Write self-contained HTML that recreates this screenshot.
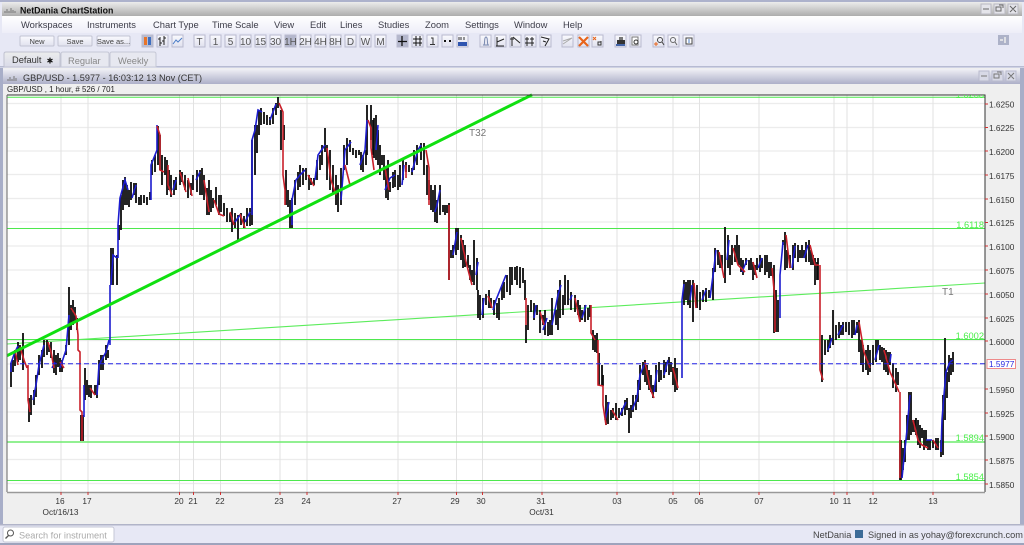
<!DOCTYPE html>
<html><head><meta charset="utf-8"><title>NetDania ChartStation</title>
<style>
html,body{margin:0;padding:0;background:#e7e8f5;width:1024px;height:545px;overflow:hidden}
svg{display:block;font-family:"Liberation Sans",sans-serif}
.m{font-size:9.4px;fill:#3c3c48}
.b{font-size:7.5px;fill:#444;text-anchor:middle}
.s{font-size:10px;fill:#555;text-anchor:middle}
.p{font-size:8.3px;fill:#333}
.d{font-size:8.3px;fill:#333;text-anchor:middle}
.g{font-size:9.3px;fill:#4cf04c;text-anchor:end}
</style></head><body>
<svg width="1024" height="545" viewBox="0 0 1024 545" xmlns="http://www.w3.org/2000/svg">
<defs>
<linearGradient id="tb" x1="0" y1="0" x2="0" y2="1"><stop offset="0" stop-color="#ececec"/><stop offset="1" stop-color="#adadad"/></linearGradient>
<linearGradient id="cw" x1="0" y1="0" x2="0" y2="1"><stop offset="0" stop-color="#f0f0f5"/><stop offset="1" stop-color="#adb0c8"/></linearGradient>
<linearGradient id="mn" x1="0" y1="0" x2="0" y2="1"><stop offset="0" stop-color="#ffffff"/><stop offset="1" stop-color="#eeeef8"/></linearGradient>
<linearGradient id="btn" x1="0" y1="0" x2="0" y2="1"><stop offset="0" stop-color="#fafafe"/><stop offset="1" stop-color="#e0e1ee"/></linearGradient>
<linearGradient id="tab" x1="0" y1="0" x2="0" y2="1"><stop offset="0" stop-color="#eceded"/><stop offset="1" stop-color="#d9dae8"/></linearGradient>
<clipPath id="pc"><rect x="7" y="95" width="978" height="397"/></clipPath>
</defs>
<rect width="1024" height="545" fill="#e7e8f5"/>
<!-- outer border -->
<rect x="0" y="0" width="1024" height="2" fill="#adb2cc"/>
<rect x="0" y="543" width="1024" height="2" fill="#9ea3bc"/>
<!-- title bar -->
<rect x="2" y="2" width="1020" height="14" fill="url(#tb)"/>
<path d="M5 13V11M7 13V9M9 13V11M11 13V8M13 13V10M15 13V11" stroke="#777" stroke-width="1"/>
<text x="20" y="13.500" font-size="8.800" font-weight="bold" fill="#111">NetDania ChartStation</text>
<g fill="#e4e4ea" stroke="#b9b9c2"><rect x="981" y="4" width="10" height="10"/><rect x="994" y="4" width="11" height="10"/><rect x="1008" y="4" width="10" height="10"/></g>
<path d="M983 9h6M996 7h5v4h-5zM999 5h4v3M1010 6l6 6M1016 6l-6 6" fill="none" stroke="#666" stroke-width="1"/>
<!-- menu -->
<rect x="2" y="16" width="1020" height="17" fill="url(#mn)"/>
<text class="m" x="21" y="28">Workspaces</text><text class="m" x="87" y="28">Instruments</text><text class="m" x="153" y="28">Chart Type</text><text class="m" x="212" y="28">Time Scale</text><text class="m" x="274" y="28">View</text><text class="m" x="310" y="28">Edit</text><text class="m" x="340" y="28">Lines</text><text class="m" x="378" y="28">Studies</text><text class="m" x="425" y="28">Zoom</text><text class="m" x="465" y="28">Settings</text><text class="m" x="514" y="28">Window</text><text class="m" x="563" y="28">Help</text>
<!-- toolbar buttons -->
<g fill="url(#btn)" stroke="#c2c3d2"><rect x="20" y="36" width="34" height="10" rx="1"/><rect x="58" y="36" width="34" height="10" rx="1"/><rect x="97" y="36" width="33" height="10" rx="1"/></g>
<text class="b" x="37" y="44">New</text><text class="b" x="75" y="44">Save</text><text class="b" x="113.500" y="44">Save as...</text>
<g fill="url(#btn)" stroke="#b9bace">
<rect x="142" y="35" width="11" height="12" fill="#b9bdd2"/><rect x="157" y="35" width="11" height="12"/><rect x="172" y="35" width="11" height="12"/>
<rect x="194" y="35" width="11" height="12"/><rect x="210" y="35" width="11" height="12"/><rect x="225" y="35" width="11" height="12"/><rect x="240" y="35" width="11" height="12"/><rect x="255" y="35" width="11" height="12"/><rect x="270" y="35" width="11" height="12"/><rect x="285" y="35" width="11" height="12" fill="#b4b7cc"/><rect x="300" y="35" width="11" height="12"/><rect x="315" y="35" width="11" height="12"/><rect x="330" y="35" width="11" height="12"/><rect x="345" y="35" width="11" height="12"/><rect x="360" y="35" width="11" height="12"/><rect x="375" y="35" width="11" height="12"/>
<rect x="397" y="35" width="11" height="12" fill="#b4b7cc"/><rect x="412" y="35" width="11" height="12"/><rect x="427" y="35" width="11" height="12"/><rect x="442" y="35" width="11" height="12"/><rect x="457" y="35" width="11" height="12"/>
<rect x="480" y="35" width="11" height="12"/><rect x="495" y="35" width="11" height="12"/><rect x="510" y="35" width="11" height="12"/><rect x="525" y="35" width="11" height="12"/><rect x="540" y="35" width="11" height="12"/>
<rect x="562" y="35" width="11" height="12"/><rect x="578" y="35" width="11" height="12"/><rect x="592" y="35" width="11" height="12"/>
<rect x="615" y="35" width="11" height="12"/><rect x="630" y="35" width="11" height="12"/><rect x="653" y="35" width="11" height="12"/><rect x="668" y="35" width="11" height="12"/><rect x="683" y="35" width="11" height="11"/>
</g>
<text class="s" x="199.500" y="45">T</text><text class="s" x="215.500" y="45">1</text><text class="s" x="230.500" y="45">5</text><text class="s" x="245.500" y="45">10</text><text class="s" x="260.500" y="45">15</text><text class="s" x="275.500" y="45">30</text><text class="s" x="290.500" y="45">1H</text><text class="s" x="305.500" y="45">2H</text><text class="s" x="320.500" y="45">4H</text><text class="s" x="335.500" y="45">8H</text><text class="s" x="350.500" y="45">D</text><text class="s" x="365.500" y="45">W</text><text class="s" x="380.500" y="45">M</text>
<!-- toolbar icons -->
<path d="M145.500 37v8" stroke="#e8742a" stroke-width="3"/><path d="M149.500 37v8" stroke="#3f6fc0" stroke-width="3"/>
<path d="M160 37v9M158 39h2M160 43h2M164 36v9M162 41h2M164 38h2" stroke="#222" fill="none"/>
<path d="M173 44l3-4 2 2 4-4" stroke="#4a7cc8" fill="none"/>
<path d="M398 41.500h9M402 36v10" stroke="#111" fill="none" stroke-width="1.300"/>
<path d="M413 39h9M413 43h9M416 36v10M420 36v10" stroke="#111" fill="none"/>
<path d="M431 38h2v6M430 44.500h5" stroke="#333" fill="none"/>
<path d="M444 41h2M449 41h2" stroke="#111" stroke-width="2"/>
<rect x="458" y="42" width="9" height="4" fill="#2f55b0"/><path d="M459 37v3M461 37v3M464 37v3" stroke="#333"/>
<path d="M483 45h6M484 45c1-1 0-8 2-8s1 7 2 8" stroke="#7a8ab0" fill="none"/>
<path d="M497 37v9M497 42l7-3M496 46h8" stroke="#222" fill="none"/>
<path d="M512 37v9M510 39h4M513 37l7 6" stroke="#222" fill="none"/>
<path d="M527 37v9M532 37v9M525 39h4M530 39h4M525 43h9" stroke="#222" fill="none"/>
<path d="M541 37l8 2-4 7M543 41l3 1" stroke="#222" fill="none"/>
<path d="M563 44l9-6M563 41l9-3" stroke="#aaa" fill="none"/>
<path d="M579 37l9 9M588 37l-9 9" stroke="#e8641a" stroke-width="2.200"/>
<path d="M593 37l3 3M596 37l-3 3" stroke="#e8641a"/><path d="M598 45v-3h3v3zM601 45v-4" stroke="#333" fill="none"/>
<rect x="617" y="40" width="8" height="4" fill="#333"/><rect x="619" y="37" width="4" height="3" fill="#777"/><rect x="616" y="44" width="9" height="2" fill="#4465a8"/>
<rect x="632" y="37" width="6" height="8" fill="#fff" stroke="#777"/><circle cx="636" cy="42" r="2" fill="none" stroke="#333"/>
<circle cx="660" cy="40" r="2.500" fill="none" stroke="#444"/><path d="M662 42l2 3" stroke="#444"/><path d="M654 44h4M656 42v4" stroke="#e8641a"/>
<circle cx="673" cy="40" r="2.500" fill="none" stroke="#666"/><path d="M675 42l2 3" stroke="#666"/>
<rect x="686" y="38" width="6" height="6" fill="#fff" stroke="#444"/><path d="M689 39v4" stroke="#4a7cc8"/>
<rect x="998" y="35" width="11" height="10" fill="#adb2c8"/><path d="M1000 40h3M1005 37v6" stroke="#eee" stroke-width="1.500"/>
<!-- tabs -->
<rect x="0" y="66" width="1024" height="1.500" fill="#b7bbd2"/>
<path d="M4 67V54q0-2 2-2h52q2 0 2 2v13z" fill="url(#tab)" stroke="#c0c2d0"/>
<path d="M61 67V54q0-2 2-2h44q2 0 2 2v13z" fill="#e7e8f0" stroke="#c6c8d6"/>
<path d="M110 67V54q0-2 2-2h42q2 0 2 2v13z" fill="#e7e8f0" stroke="#c6c8d6"/>
<text x="12" y="63" font-size="9.300" fill="#333">Default</text><text x="50" y="63.500" text-anchor="middle" font-size="8" fill="#111" style="font-family:'DejaVu Sans',sans-serif">✱</text>
<text x="68" y="64" font-size="9.300" fill="#888">Regular</text><text x="118" y="64" font-size="9.300" fill="#888">Weekly</text>
<!-- chart window -->
<rect x="0" y="68" width="3" height="457" fill="#a8aec8"/>
<rect x="1020" y="68" width="4" height="457" fill="#a8aec8"/>
<rect x="3" y="68" width="1017" height="456" fill="#efefef"/>
<rect x="3" y="69" width="1017" height="15" fill="url(#cw)"/>
<path d="M8 81V79M10 81V77M12 81V79M14 81V76M16 81V78" stroke="#777"/>
<text x="23" y="81" font-size="9.150" fill="#333">GBP/USD - 1.5977 - 16:03:12  13 Nov (CET)</text>
<g fill="#d8d9e6" stroke="#b9bace"><rect x="979" y="71" width="10" height="10"/><rect x="992" y="71" width="11" height="10"/><rect x="1006" y="71" width="10" height="10"/></g>
<path d="M981 76h6M994 74h5v4h-5zM997 72h4v3M1008 73l6 6M1014 73l-6 6" fill="none" stroke="#777"/>
<text x="7" y="92" font-size="7.900" fill="#222">GBP/USD , 1 hour, # 526 / 701</text>
<!-- plot -->
<rect x="7" y="95" width="978" height="397" fill="#fff"/>
<path d="M7 103.500H985M7 127.500H985M7 151H985M7 174.500H985M7 198.500H985M7 222H985M7 246H985M7 270H985M7 293.500H985M7 317H985M7 340.500H985M7 364H985M7 388H985M7 412H985M7 436H985M7 459.500H985M7 483.500H985" stroke="#ececec" stroke-width="1.300"/>
<path d="M61 95V492M88 95V492M179.500 95V492M193.500 95V492M220.500 95V492M280 95V492M307 95V492M398 95V492M456.500 95V492M482.500 95V492M542 95V492M617 95V492M673 95V492M699.500 95V492M759 95V492M834 95V492M847 95V492M873 95V492M933 95V492" stroke="#e2e2e2" stroke-width="1"/>
<!-- green horizontals -->
<path d="M7 97.300H985M7 228.500H985M7 339.500H985M7 480.500H985" stroke="#4ee84e" stroke-width="1"/>
<path d="M7 442H985" stroke="#6eec6e" stroke-width="1.500"/>
<path d="M7 344L985 283" stroke="#5cec5c" stroke-width="1.100"/>
<!-- wicks -->
<path fill="none" stroke="#0c0c0c" stroke-width="1.800" d="M11 363V387M13 360V372M15 350V366M18 342V362M20 345V360M23 333V370M29 398V422M31 395V415M34 390V405M36 375V397M39 355V375M42 350V368M44 340V357M47 340V355M49 345V352M51 342V358M54 350V373M56 355V375M58 353V367M60 358V372M62 360V372M66 345V355M69 287V345M71 305V330M73 300V325M75 307V322M77 318V330M81 415V441M83 415V441M85 368V400M87 380V395M89 385V397M91 385V398M95 385V395M97 385V398M99 360V385M101 355V370M103 355V370M106 345V360M108 350V358M111 248V285M113 248V285M117 255V285M119 225V240M121 195V230M123 180V210M125 177V205M127 185V205M129 190V207M131 182V200M134 183V195M136 183V203M139 197V205M141 195V205M144 195V203M147 197V205M150 192V200M152 160V175M155 155V172M158 126V165M160 135V170M162 155V185M165 157V175M167 160V195M169 170V190M171 175V197M174 180V195M176 177V190M180 170V185M182 172V182M185 175V190M188 180V198M191 183V195M193 175V190M197 170V192M200 170V195M202 168V195M204 175V200M207 188V215M209 180V215M211 190V212M213 198V208M216 187V205M219 195V215M221 195V212M224 203V216M227 208V222M230 213V222M232 208V232M235 213V228M238 215V240M241 213V225M244 216V228M247 208V226M250 208V226M252 140V225M255 125V175M257 125V153M259 110V135M261 108V125M264 112V124M267 115V125M270 117V125M273 108V124M276 103V115M278 97V108M281 110V150M284 125V140M286 170V205M288 190V207M290 200V228M292 198V228M295 180V205M298 172V190M300 165V187M303 168V185M306 168V180M309 175V190M311 178V185M314 178V185M317 160V180M320 155V170M322 145V165M325 128V152M327 145V180M330 150V190M333 165V195M336 175V205M338 185V212M341 168V205M344 145V170M347 138V165M350 140V152M353 148V155M356 150V158M359 150V155M361 152V170M363 155V172M366 150V165M367 105V155M371 105V140M373 120V155M374 118V158M376 115V160M378 130V165M380 145V175M382 155V165M384 155V180M386 168V198M388 160V200M390 182V192M393 172V188M395 170V187M398 175V190M400 165V187M403 160V180M406 162V172M409 165V172M412 168V175M414 150V170M417 145V165M421 143V160M424 143V175M427 165V195M429 180V200M431 185V210M433 190V212M435 185V222M437 200V223M440 185V215M443 205V212M445 205V215M447 205V213M449 203V280M451 250V258M453 245V258M456 228V255M458 228V250M461 235V260M463 240V268M465 245V267M468 255V268M470 265V280M472 270V282M474 240V285M477 258V290M478 290V318M480 295V320M483 298V318M486 294V305M489 290V308M491 298V308M494 300V315M497 303V318M499 298V320M502 285V300M504 282V298M507 275V292M510 267V295M512 267V285M515 267V280M517 266V285M520 267V288M523 268V283M525 280V300M526 325V343M528 305V330M531 300V312M534 303V320M537 305V315M540 310V333M543 315V325M545 310V335M548 322V336M550 320V335M552 298V335M556 310V325M558 290V330M560 280V318M563 295V315M565 275V305M568 280V305M571 292V310M575 295V312M578 300V315M580 305V322M582 310V320M585 305V322M588 308V320M590 305V317M593 330V350M595 335V352M597 333V353M599 353V385M602 365V385M603 375V386M606 395V425M608 402V424M611 410V420M613 408V418M616 403V420M619 408V418M622 408V416M625 400V415M627 398V410M629 408V433M631 405V418M633 395V412M636 395V410M638 380V402M640 365V390M643 362V375M645 360V382M647 365V385M649 370V390M651 375V392M653 385V398M656 365V392M659 362V382M661 370V380M664 360V378M666 362V372M669 357V375M671 362V372M673 367V385M675 358V392M677 368V390M684 280V305M686 282V300M688 280V305M690 280V308M693 280V322M697 285V308M700 292V310M703 290V302M706 288V302M709 290V298M713 268V300M715 248V272M718 250V265M720 255V268M722 255V268M725 227V283M728 235V268M730 255V275M732 245V265M735 245V262M737 235V262M739 245V265M741 258V272M743 260V275M746 258V265M749 260V270M751 258V270M753 262V280M755 265V275M757 258V270M760 255V272M762 258V268M765 255V275M767 255V272M769 262V278M771 262V276M774 265V333M776 290V332M778 300V332M783 240V245M785 232V270M787 250V268M790 255V268M793 245V270M795 243V258M798 245V262M800 250V258M802 245V258M804 250V258M806 242V262M809 240V262M811 250V265M813 255V265M815 258V285M817 262V280M818 258V280M822 335V382M825 340V355M828 340V352M830 335V348M833 310V345M836 325V340M839 322V338M841 325V335M843 322V335M846 322V332M849 322V335M852 320V338M854 320V335M857 322V333M859 320V352M861 340V365M863 345V372M866 350V370M868 345V375M870 350V372M873 345V365M876 340V362M878 340V350M880 345V360M882 347V362M884 348V370M886 350V372M888 352V375M890 352V365M893 363V388M896 368V392M898 372V385M900 440V480M901 440V480M903 448V470M905 440V462M907 415V440M909 392V440M911 392V435M913 420V432M915 420V432M916 418V435M918 420V445M920 425V448M922 428V438M924 430V450M926 430V446M928 440V450M930 440V450M933 440V448M936 438V450M938 438V450M941 440V457M943 395V455M945 338V420M947 372V398M949 355V382M951 358V375M953 352V372"/>
<!-- blue rising legs -->
<path fill="none" stroke="#1c1ccf" stroke-width="1.600" d="M11 372V363L15 352L18 346M33 400L36 385L39 365L44 345M52 368L55 362M60 368L66 350L69 315M84 417V385M97 395L99 365L106 352L109 340M110 345V285M111 285L113 255L117 258M118 258V225L120 198L125 180L128 190M132 198L136 185M151 200V165L157 150V125M173 190L176 180M196 180L200 172M235 222L240 215M245 222L250 212M252 215V140L255 130L258 110L262 112M270 120L276 104M292 225V200L296 180L300 175L305 170M315 180L318 155L325 145M341 200L345 150L351 142M360 165L365 150L367 120M376 150L378 125M385 190L390 178L395 175M402 185L404 165M412 172L418 150L421 145M435 212L437 205L440 190M453 255L457 232M476 275L478 262M482 315L484 298M493 310L496 300L500 290L506 275M534 318L536 305M543 330L547 318M552 325L558 295L561 285M570 300L572 295M582 318L586 305M605 420L609 402M620 415L626 402M632 410L637 398L640 375L644 365M654 392L657 370M664 375L668 360M682 378V300L684 284M690 300L692 285M702 300L706 290M710 298L714 268L716 250M727 260L729 240M742 272L747 260M758 268L762 258M780 318V275L783 242M792 268L795 246M804 258L808 245M828 350L832 338M838 335L843 325M855 335L857 325M875 360L879 345M890 362L891 354M902 478L904 458L907 430L910 395M926 440L932 440M941 452L942 420L944 395L946 372L950 362L953 360"/>
<!-- red falling legs -->
<path fill="none" stroke="#c9202a" stroke-width="1.600" d="M15 350L18 365M20 347L24 360L27 368M28 365V400L30 412M48 342L51 352L54 368M60 362L64 368M71 308L76 316L78 335V350L80 352V410L82 412V441M90 388L95 395M157 126L160 135V170L164 172M168 165V185L172 195M180 172L186 192M188 178L192 196M204 180L209 212M214 200L219 214L224 216M230 212L234 225M240 214L245 228M279 103L283 112V175L285 190V205M308 175L314 186M327 148L331 180L336 195M345 165L350 185M368 120L371 128V148L374 170M385 168L389 190M406 165V178M426 150L429 168V205M449 205V280M461 238L466 262L472 285M488 296L492 308M526 298V325M540 312L544 325M575 298L580 322M591 305V333L595 340M598 340V385L603 386V405L606 425M612 410L618 420M645 362L650 388L654 398M673 368L678 388M694 283L696 308M719 252L724 278M733 248L738 265L745 272M753 262L757 278M772 268L775 300V332M786 235L790 268M810 245L815 265L819 265M820 265V370L823 380M859 322L864 352L870 368M884 350L890 372L896 385L899 392M900 392V478M913 420L918 440L922 445L928 448M933 440L938 448"/>
<!-- dashed -->
<path d="M20 363.700H985" stroke="#2323e6" stroke-width="1" stroke-dasharray="5 3"/>
<!-- thick trendline -->
<path d="M7 355.700L532 94.800" stroke="#10e010" stroke-width="3"/>
<!-- plot frame -->
<path d="M7 95H985V492" fill="none" stroke="#333" stroke-width="1"/>
<path d="M7 95V492" stroke="#666" stroke-width="1"/>
<path d="M7 492.500H985" stroke="#999" stroke-width="1.500"/>
<!-- labels in plot -->
<text x="469" y="136" font-size="10" fill="#777">T32</text>
<text x="942" y="295" font-size="10" fill="#777">T1</text>
<text class="g" x="984" y="98" clip-path="url(#pc)">1.6268</text>
<text class="g" x="984" y="228">1.6118</text>
<text class="g" x="984" y="339">1.6002</text>
<text class="g" x="984" y="441">1.5894</text>
<text class="g" x="984" y="480">1.5854</text>
<!-- right ticks -->
<path d="M985 104h3M985 127.500h3M985 151h3M985 175h3M985 199h3M985 222.500h3M985 246h3M985 270h3M985 294h3M985 318h3M985 341h3M985 389h3M985 413h3M985 436h3M985 460h3M985 484h3" stroke="#d23030" stroke-width="1"/>
<g class="p"><text x="989" y="107.500">1.6250</text><text x="989" y="131">1.6225</text><text x="989" y="155">1.6200</text><text x="989" y="179">1.6175</text><text x="989" y="203">1.6150</text><text x="989" y="226">1.6125</text><text x="989" y="250">1.6100</text><text x="989" y="274">1.6075</text><text x="989" y="298">1.6050</text><text x="989" y="322">1.6025</text><text x="989" y="345">1.6000</text><text x="989" y="393">1.5950</text><text x="989" y="417">1.5925</text><text x="989" y="440">1.5900</text><text x="989" y="464">1.5875</text><text x="989" y="488">1.5850</text></g>
<rect x="987" y="359.500" width="28.500" height="9" fill="#fff" stroke="#ee8a8a" stroke-width="1"/>
<text x="989" y="367" font-size="8.300" fill="#2a2ae0">1.5977</text>
<!-- bottom ticks -->
<path d="M61 492v3M88 492v3M179.500 492v3M193.500 492v3M220.500 492v3M280 492v3M307 492v3M398 492v3M456.500 492v3M482.500 492v3M542 492v3M617 492v3M673 492v3M699.500 492v3M759 492v3M834 492v3M847 492v3M873 492v3M933 492v3" stroke="#d23030"/>
<g class="d"><text x="60" y="504">16</text><text x="87" y="504">17</text><text x="179" y="504">20</text><text x="193" y="504">21</text><text x="220" y="504">22</text><text x="279" y="504">23</text><text x="306" y="504">24</text><text x="397" y="504">27</text><text x="455" y="504">29</text><text x="481" y="504">30</text><text x="541" y="504">31</text><text x="617" y="504">03</text><text x="673" y="504">05</text><text x="699" y="504">06</text><text x="759" y="504">07</text><text x="834" y="504">10</text><text x="847" y="504">11</text><text x="873" y="504">12</text><text x="933" y="504">13</text><text x="60.500" y="515">Oct/16/13</text><text x="541.500" y="515">Oct/31</text></g>
<!-- status bar -->
<rect x="0" y="524" width="1024" height="1.500" fill="#b1b4c8"/>
<rect x="3" y="527" width="111" height="15" rx="2" fill="#fff" stroke="#c5c7d6"/>
<circle cx="10.500" cy="533" r="3" fill="none" stroke="#555"/><path d="M8.500 535.500l-3 3" stroke="#555" stroke-width="1.300"/>
<text x="19" y="538.500" font-size="9.200" fill="#aaa">Search for instrument</text>
<text x="813" y="538" font-size="9.200" fill="#444">NetDania</text>
<rect x="855" y="530" width="8" height="8" fill="#3c6b98"/>
<text x="868" y="538" font-size="9.200" fill="#444">Signed in as yohay@forexcrunch.com</text>
</svg>
</body></html>
